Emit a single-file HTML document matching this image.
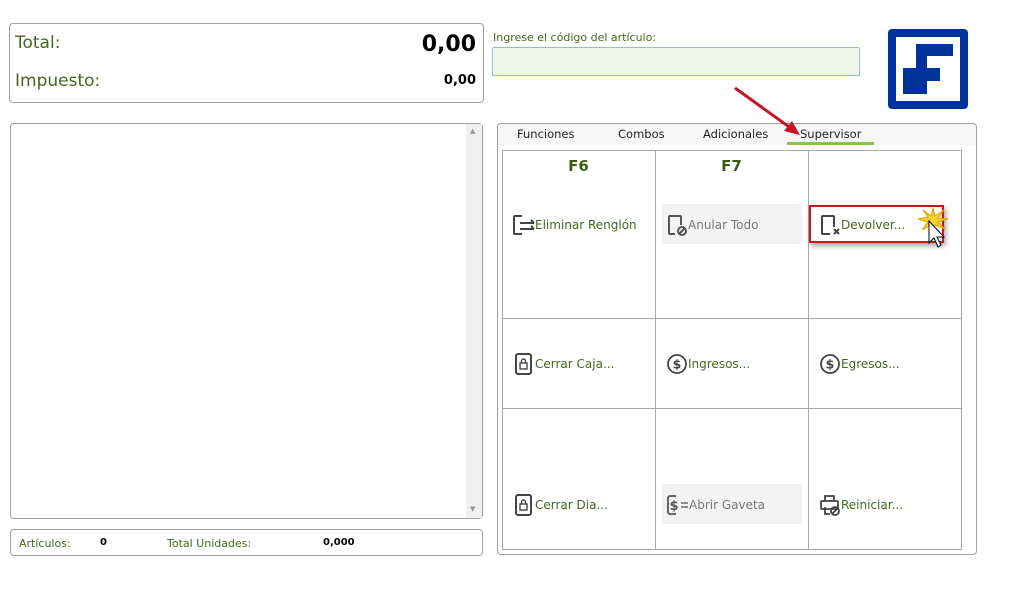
<!DOCTYPE html>
<html><head><meta charset="utf-8"><style>
*{box-sizing:border-box;margin:0;padding:0}
body{width:1024px;height:606px;background:#fff;font-family:"DejaVu Sans",Verdana,sans-serif;position:relative;overflow:hidden;color:#46661e}
.abs{position:absolute}
.box{position:absolute;border:1px solid #a0a0a0;border-radius:4px}
.g{color:#46661e}
.cell{position:absolute;border-left:1px solid #a8a8a8;border-top:1px solid #a8a8a8}
.btn{position:absolute;font-size:12px;display:flex;align-items:center;height:38px;padding-left:5px;color:#46661e;padding-top:1px}
.dis{background:#f3f3f3;color:#777;border-radius:3px}
.fk{position:absolute;font-weight:bold;font-size:15px;color:#3b5e14;width:153px;text-align:center;top:157px}
</style></head><body>
<div class="box" style="left:9px;top:23px;width:475px;height:80px"></div>
<div class="abs g" style="left:15px;top:33px;font-size:17px">Total:</div>
<div class="abs" style="right:548px;top:32px;font-size:22px;font-weight:bold;color:#000">0,00</div>
<div class="abs g" style="left:15px;top:71px;font-size:17px">Impuesto:</div>
<div class="abs" style="right:548px;top:73px;font-size:13px;font-weight:bold;color:#000">0,00</div>

<div class="abs g" style="left:493px;top:31px;font-size:11px">Ingrese el código del artículo:</div>
<div class="abs" style="left:492px;top:47px;width:368px;height:29px;background:#f0f5ea;border:1px solid #9ab5e6;border-radius:2px"></div>

<div class="abs" style="left:888px;top:29px;width:80px;height:80px;background:#003399;border-radius:4px"></div>
<div class="abs" style="left:896px;top:37px;width:64px;height:64px;background:#fff"></div>
<svg class="abs" style="left:895px;top:36px" width="66" height="66"><path fill="#003399" d="M21 8H58V20H32V32H45V45H32V58H8V32H21Z"/></svg>

<div class="box" style="left:10px;top:123px;width:473px;height:396px"></div>
<div class="abs" style="left:466px;top:124px;width:16px;height:394px;background:#f0f0f0"></div>
<div class="abs" style="left:470px;top:127px;font-size:7px;color:#999">▲</div>
<div class="abs" style="left:470px;top:505px;font-size:7px;color:#999">▼</div>

<div class="box" style="left:10px;top:529px;width:473px;height:27px"></div>
<div class="abs g" style="left:19px;top:537px;font-size:11px">Artículos:</div>
<div class="abs" style="left:100px;top:537px;font-size:10px;font-weight:bold;color:#000">0</div>
<div class="abs g" style="left:167px;top:537px;font-size:11px">Total Unidades:</div>
<div class="abs" style="left:323px;top:537px;font-size:10px;font-weight:bold;color:#000">0,000</div>

<div class="box" style="left:497px;top:123px;width:480px;height:432px"></div>
<div class="abs" style="left:498px;top:124px;width:478px;height:21px;background:#f7f7f7;border-radius:4px 4px 0 0"></div>
<div class="abs" style="left:517px;top:127px;font-size:11.5px;color:#222">Funciones</div>
<div class="abs" style="left:618px;top:127px;font-size:11.5px;color:#222">Combos</div>
<div class="abs" style="left:703px;top:127px;font-size:11.5px;color:#222">Adicionales</div>
<div class="abs" style="left:800px;top:127px;font-size:11.5px;color:#222">Supervisor</div>
<div class="abs" style="left:787px;top:142px;width:87px;height:3px;background:#8bc34a"></div>

<div class="abs" style="left:502px;top:150px;width:460px;height:400px;border-right:1px solid #a8a8a8;border-bottom:1px solid #a8a8a8"></div>
<div class="cell" style="left:502px;top:150px;width:154px;height:400px;border-top:1px solid #a8a8a8"></div>
<div class="cell" style="left:655px;top:150px;width:154px;height:400px"></div>
<div class="cell" style="left:808px;top:150px;width:154px;height:400px"></div>
<div class="abs" style="left:502px;top:318px;width:460px;height:1px;background:#a8a8a8"></div>
<div class="abs" style="left:502px;top:408px;width:460px;height:1px;background:#a8a8a8"></div>

<div class="fk" style="left:502px">F6</div>
<div class="fk" style="left:655px">F7</div>

<div class="btn" style="left:507px;top:205px"><svg width="23" height="24" viewBox="0 0 23 24" fill="none" stroke="#444" stroke-width="2"><path d="M10 3H3a1 1 0 00-1 1V20a1 1 0 001 1H10"/><path d="M8 10H22M19 7L22 10M8 16H22M19 13L22 16"/></svg>Eliminar Renglón</div>
<div class="btn dis" style="left:662px;top:204px;width:140px;height:40px"><svg width="21" height="24" viewBox="0 0 21 24" fill="none" stroke="#555" stroke-width="2"><path d="M8 21H3a1 1 0 01-1-1V4a1 1 0 011-1H13a1 1 0 011 1V12"/><circle cx="15" cy="18" r="4"/><path d="M12.5 20.5L17.5 15.5"/></svg>Anular Todo</div>
<div class="abs" style="left:809px;top:205px;width:135px;height:38px;border:2px solid #c8141e;box-shadow:2px 3px 5px rgba(0,0,0,.35)"></div>
<div class="btn" style="left:815px;top:205px"><svg width="21" height="24" viewBox="0 0 21 24" fill="none" stroke="#444" stroke-width="2"><path d="M10 21H3a1 1 0 01-1-1V4a1 1 0 011-1H13a1 1 0 011 1V14"/><path d="M14 16L19 21M19 16L14 21"/></svg>Devolver...</div>
<svg class="abs" style="left:915px;top:205px" width="36" height="50"><path d="M18 3L20 11L29 5L23 13L33 14L23 17L30 24L20 20L18 28L16 20L7 25L13 17L3 14L13 12L8 5L16 11Z" fill="#f8d030" stroke="#e0a000"/><path d="M14 16V38L19 33L23 42L26 40L22 32H29Z" fill="#fff" stroke="#000"/></svg>

<div class="btn" style="left:509px;top:344px"><svg width="21" height="24" viewBox="0 0 21 24" fill="none" stroke="#444" stroke-width="2"><rect x="2" y="2" width="15" height="20" rx="2"/><rect x="6" y="11" width="7" height="6" stroke-width="1.4"/><path d="M7.5 11V9a2 2 0 014 0v2" stroke-width="1.4"/></svg>Cerrar Caja...</div>
<div class="btn" style="left:661px;top:344px"><svg width="22" height="22" viewBox="0 0 22 22" fill="none" stroke="#444" stroke-width="1.8"><circle cx="11" cy="11" r="9"/><text x="11" y="15.5" font-size="12.5" font-weight="bold" text-anchor="middle" fill="#444" stroke="none" font-family="DejaVu Sans">$</text></svg>Ingresos...</div>
<div class="btn" style="left:814px;top:344px"><svg width="22" height="22" viewBox="0 0 22 22" fill="none" stroke="#444" stroke-width="1.8"><circle cx="11" cy="11" r="9"/><text x="11" y="15.5" font-size="12.5" font-weight="bold" text-anchor="middle" fill="#444" stroke="none" font-family="DejaVu Sans">$</text></svg>Egresos...</div>

<div class="btn" style="left:509px;top:485px"><svg width="21" height="24" viewBox="0 0 21 24" fill="none" stroke="#444" stroke-width="2"><rect x="2" y="2" width="15" height="20" rx="2"/><rect x="6" y="11" width="7" height="6" stroke-width="1.4"/><path d="M7.5 11V9a2 2 0 014 0v2" stroke-width="1.4"/></svg>Cerrar Dia...</div>
<div class="btn dis" style="left:662px;top:484px;width:140px;height:40px;padding-left:4px"><svg width="23" height="24" viewBox="0 0 23 24" fill="none" stroke="#555" stroke-width="1.8"><path d="M10 3H4a2 2 0 00-2 2V19a2 2 0 002 2H10"/><text x="8" y="17" font-size="13" font-weight="bold" text-anchor="middle" fill="#555" stroke="none" font-family="DejaVu Sans">$</text><path d="M15 10H22M15 14H22" stroke-width="1.3"/></svg>Abrir Gaveta</div>
<div class="btn" style="left:814px;top:485px"><svg width="22" height="24" viewBox="0 0 22 24" fill="none" stroke="#444" stroke-width="1.8"><path d="M6 8V3H15V8"/><rect x="2" y="8" width="17" height="8" rx="1"/><path d="M6 14V21H11"/><circle cx="16" cy="18" r="4"/><path d="M13.5 20.5L18.5 15.5"/></svg>Reiniciar...</div>

<svg class="abs" style="left:730px;top:85px" width="75" height="55"><path d="M5 3L62 44" stroke="#c8141e" stroke-width="3"/><path d="M70 50L54 46L62 36Z" fill="#c8141e"/></svg>
</body></html>
